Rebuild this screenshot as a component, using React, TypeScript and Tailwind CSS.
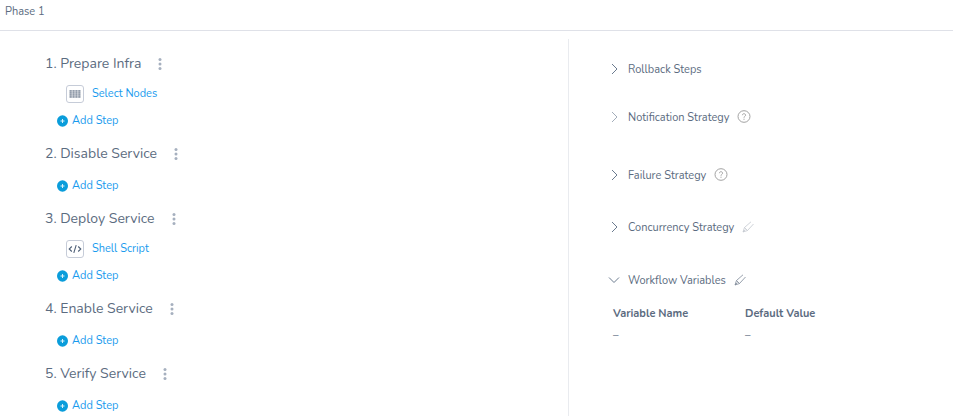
type StepIcon = "nodes" | "script";

type Stage = {
  name: string;
  steps: { label: string; icon: StepIcon }[];
};

const stages: Stage[] = [
  { name: "Prepare Infra", steps: [{ label: "Select Nodes", icon: "nodes" }] },
  { name: "Disable Service", steps: [] },
  { name: "Deploy Service", steps: [{ label: "Shell Script", icon: "script" }] },
  { name: "Enable Service", steps: [] },
  { name: "Verify Service", steps: [] },
];

function DotsIcon() {
  return (
    <svg width="4" height="12" viewBox="0 0 4 12" fill="#a6b0bf">
      <circle cx="2" cy="1.5" r="1.5" />
      <circle cx="2" cy="6" r="1.5" />
      <circle cx="2" cy="10.5" r="1.5" />
    </svg>
  );
}

function NodesIcon() {
  return (
    <svg width="12" height="8" viewBox="0 0 12 8" fill="#7b8798">
      {[0, 1, 2, 3].map((col) =>
        [0, 1, 2, 3].map((row) => (
          <rect
            key={`${col}-${row}`}
            x={0.5 + col * 2.9}
            y={0.2 + row * 2}
            width="2.3"
            height="1.5"
          />
        )),
      )}
    </svg>
  );
}

function ScriptIcon() {
  return (
    <svg
      width="14"
      height="10"
      viewBox="0 0 14 10"
      fill="none"
      stroke="#4f6077"
      strokeWidth="1.1"
    >
      <path d="M3.8 2.5 1.2 5l2.6 2.500M10.2 2.500 12.800 5l-2.600 2.500M8.200 1.200 5.800 8.800" />
    </svg>
  );
}

function PlusIcon() {
  return (
    <svg width="11" height="12" viewBox="0 0 11 12">
      <ellipse cx="5.5" cy="6" rx="5.5" ry="5.8" fill="#0a9ddb" />
      <path d="M5.5 4v4M3.5 6h4" stroke="#d9f2fc" strokeWidth="1" />
    </svg>
  );
}

function Chevron({ open, muted }: { open?: boolean; muted?: boolean }) {
  return (
    <svg
      width="12"
      height="12"
      viewBox="0 0 12 12"
      fill="none"
      stroke={muted ? "#a3adba" : "#6b7b8f"}
      strokeWidth="1"
    >
      <path d={open ? "M1 3.5 6 8.5 11 3.5" : "M4 1 9 6 4 11"} />
    </svg>
  );
}

function HelpIcon() {
  return (
    <svg width="14" height="14" viewBox="0 0 14 14" fill="none" stroke="#a3a3a3">
      <ellipse cx="7" cy="6.500" rx="6" ry="5.8" />
      <path d="M5.4 5.200c0-2 3.2-2 3.2 0C8.6 6.300 7 6.300 7 7.700" />
      <path d="M7 8.700v1.1" />
    </svg>
  );
}

function PencilIcon({ muted }: { muted?: boolean }) {
  return (
    <svg
      width="12"
      height="12"
      viewBox="0 0 12 12"
      fill="none"
      stroke={muted ? "#c3c8cf" : "#7e8998"}
      strokeWidth="0.8"
      strokeLinejoin="round"
    >
      <path d="M9 0.8 2.5 6.5 1 11 5.5 9.5 11.5 3M2.5 6.5l3 3M1 11l2.5-2.5" />
    </svg>
  );
}

function StageBlock({ stage, index }: { stage: Stage; index: number }) {
  return (
    <section>
      <div className="flex h-6 items-center gap-[15px]">
        <h2 className="text-[14px]">
          {index}. {stage.name}
        </h2>
        <button
          type="button"
          aria-label={`${stage.name} options`}
          className="flex w-2 justify-center"
        >
          <DotsIcon />
        </button>
      </div>

      {stage.steps.map((step) => (
        <div
          key={step.label}
          className="mt-1 flex h-7 items-center gap-2 pl-[21px]"
        >
          <span className="flex size-[18px] items-center justify-center rounded-[3px] border border-[#c6ccd8]">
            {step.icon === "nodes" ? <NodesIcon /> : <ScriptIcon />}
          </span>
          <a href="#step" className="text-[#199bee]">
            {step.label}
          </a>
        </div>
      ))}

      <button
        type="button"
        className={`ml-3 flex h-5 items-center gap-1 text-[#199bee] ${
          stage.steps.length ? "mt-[3px]" : "mt-2.5"
        }`}
      >
        <PlusIcon />
        Add Step
      </button>
    </section>
  );
}

type PanelRowProps = {
  label: string;
  open?: boolean;
  muted?: boolean;
  children?: React.ReactNode;
};

function PanelRow({ label, open, muted, children }: PanelRowProps) {
  return (
    <div className="flex h-5 items-center gap-2">
      <button
        type="button"
        aria-expanded={!!open}
        className="flex items-center gap-2"
      >
        <Chevron open={open} muted={muted} />
        <span className="pt-0.5">{label}</span>
      </button>
      {children}
    </div>
  );
}

export default function App() {
  return (
    <div className="flex min-h-screen flex-col bg-white font-[Nunito,Lato,sans-serif] text-[11px] leading-5 text-[#5b6b80]">
      <header className="border-b border-[#dfe1e8] px-[5px] pt-0.5 pb-2">
        <h1>Phase 1</h1>
      </header>

      <main className="flex flex-1 pt-2">
        <div className="flex flex-1 flex-col gap-[11px] pt-[13px] pl-[45px]">
          {stages.map((stage, i) => (
            <StageBlock key={stage.name} stage={stage} index={i + 1} />
          ))}
        </div>

        <aside className="w-[385px] border-l border-[#e9ebef] pt-5 pl-[39px]">
          <PanelRow label="Rollback Steps" />
          <div className="mt-7">
            <PanelRow label="Notification Strategy" muted>
              <button type="button" aria-label="About notification strategy">
                <HelpIcon />
              </button>
            </PanelRow>
          </div>
          <div className="mt-[38px]">
            <PanelRow label="Failure Strategy">
              <button type="button" aria-label="About failure strategy">
                <HelpIcon />
              </button>
            </PanelRow>
          </div>
          <div className="mt-8">
            <PanelRow label="Concurrency Strategy">
              <button type="button" aria-label="Edit concurrency strategy">
                <PencilIcon muted />
              </button>
            </PanelRow>
          </div>
          <div className="mt-[33px]">
            <PanelRow label="Workflow Variables" open>
              <button type="button" aria-label="Edit workflow variables">
                <PencilIcon />
              </button>
            </PanelRow>
            <table className="mt-[14px] ml-[5px] text-left">
              <thead>
                <tr>
                  <th className="w-[132px] p-0 font-bold">Variable Name</th>
                  <th className="p-0 font-bold">Default Value</th>
                </tr>
              </thead>
              <tbody className="font-bold text-[#8f99a8]">
                <tr>
                  <td className="p-0 pt-0.5">–</td>
                  <td className="p-0 pt-0.5">–</td>
                </tr>
              </tbody>
            </table>
          </div>
        </aside>
      </main>
    </div>
  );
}
